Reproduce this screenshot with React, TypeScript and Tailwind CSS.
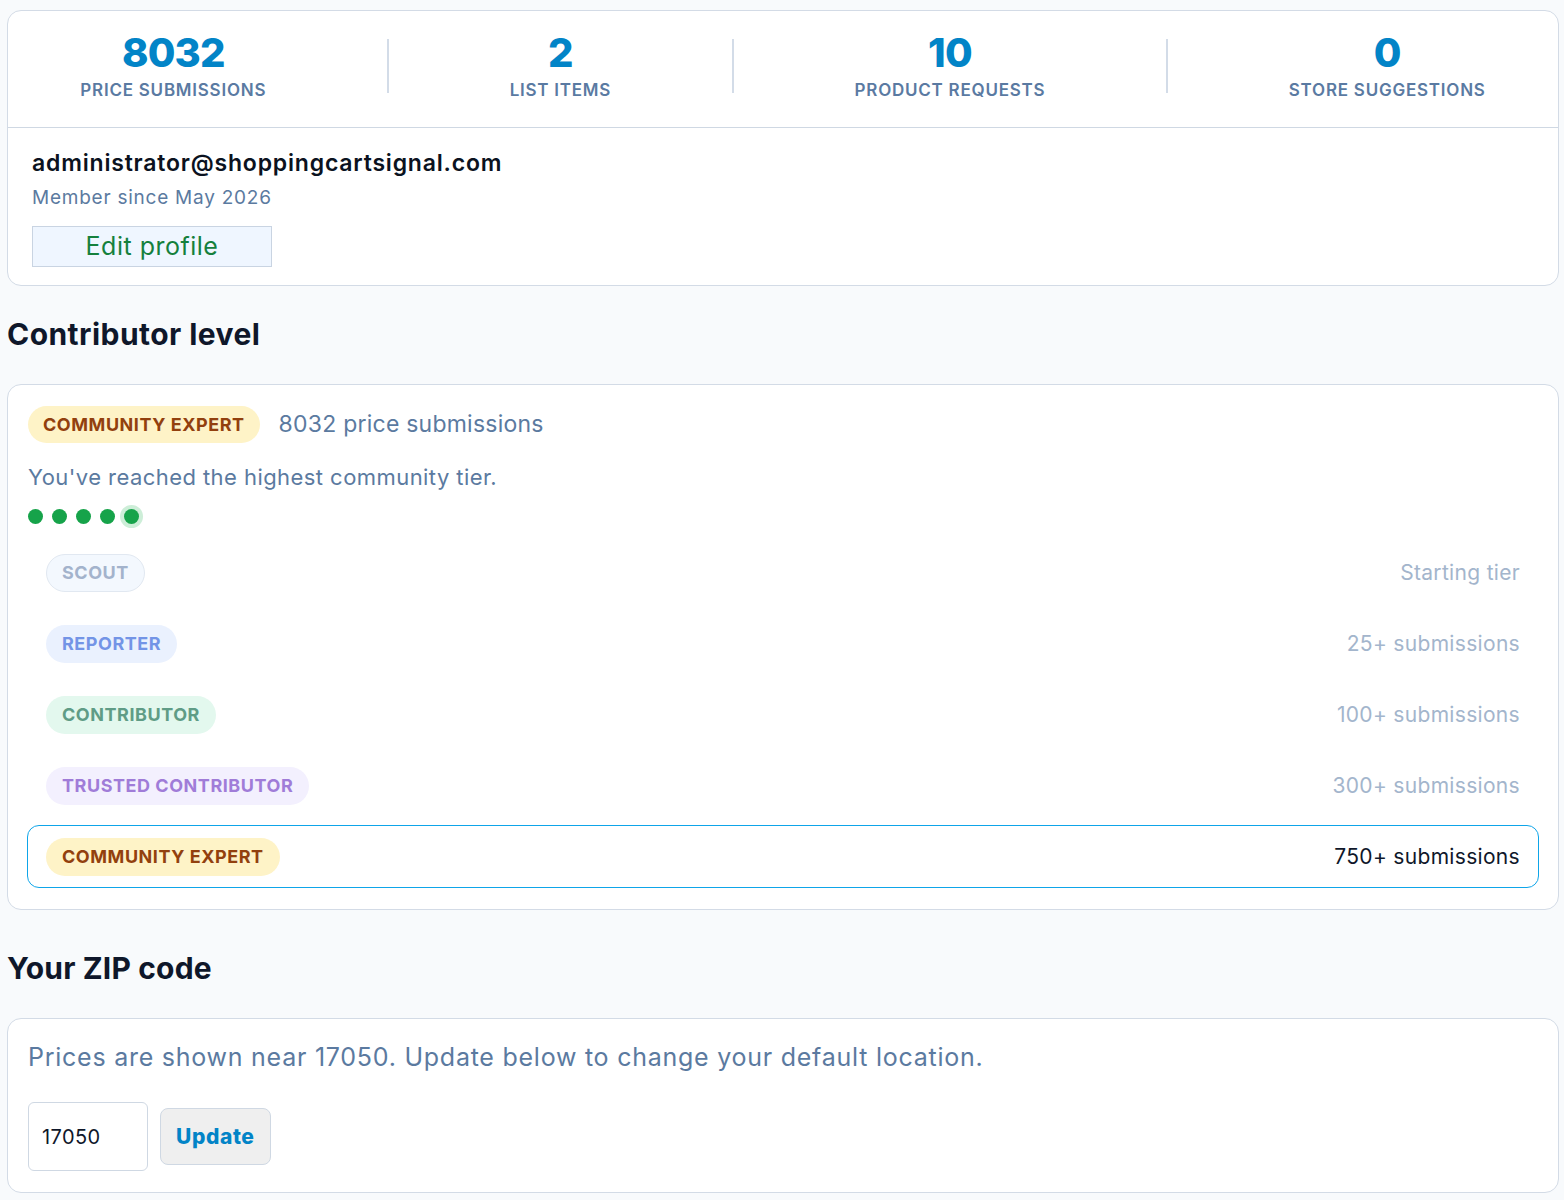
import React from "react";

const font = { fontFamily: "Inter, 'Noto Sans', sans-serif" };

const stats = [
  { value: "8032", label: "PRICE SUBMISSIONS" },
  { value: "2", label: "LIST ITEMS" },
  { value: "10", label: "PRODUCT REQUESTS" },
  { value: "0", label: "STORE SUGGESTIONS" },
];

type Tier = {
  name: string;
  note: string;
  badge: string;
  current?: boolean;
};

const tiers: Tier[] = [
  { name: "SCOUT", note: "Starting tier", badge: "bg-[#f3f8fe] text-[#a3b3cc] border border-[#e1e8f1]" },
  { name: "REPORTER", note: "25+ submissions", badge: "bg-[#eaf1fe] text-[#7394e6] border border-transparent" },
  { name: "CONTRIBUTOR", note: "100+ submissions", badge: "bg-[#e3f8ee] text-[#5f9c86] border border-transparent" },
  { name: "TRUSTED CONTRIBUTOR", note: "300+ submissions", badge: "bg-[#f3f0fe] text-[#a07cd8] border border-transparent" },
  { name: "COMMUNITY EXPERT", note: "750+ submissions", badge: "bg-[#fef3c7] text-[#92400e] border border-transparent", current: true },
];

function StatsRow() {
  const items: React.ReactNode[] = [];
  stats.forEach((s, i) => {
    if (i > 0) items.push(<div key={`d${i}`} className="w-[2px] h-[54px] bg-[#d3dce8]" />);
    items.push(
      <div key={s.label} className="flex flex-col items-center">
        <div className="text-[40px] leading-[44px] font-extrabold text-[#0284c7] tracking-[-0.02em]">{s.value}</div>
        <div className="text-[17px] leading-[22px] font-semibold text-[#5a7aa2] tracking-[0.045em] mt-[4px]">{s.label}</div>
      </div>
    );
  });
  return (
    <div className="flex items-center justify-around px-3 h-[117px] pb-[7px] border-b border-[#cfd8e3]">
      {items}
    </div>
  );
}

export default function App() {
  return (
    <div style={font} className="min-h-[1200px] bg-[#f8fafc] pl-[7px] pr-[5px] pt-[10px]">
      {/* profile summary */}
      <section className="bg-white border border-[#d3dbe6] rounded-[14px]">
        <StatsRow />
        <div className="px-6 pt-[20px] pb-[18px]">
          <div className="text-[23px] leading-[30px] font-semibold text-[#0b1220] tracking-[0.035em]">
            administrator@shoppingcartsignal.com
          </div>
          <div className="text-[19px] leading-[26px] text-[#5b7aa0] mt-[7px] tracking-[0.04em]">Member since May 2026</div>
          <button className="mt-[15px] w-[240px] h-[41px] bg-[#eff6ff] border border-[#c9d4e2] text-[#15803d] text-[25px] leading-none tracking-[0.02em]">
            Edit profile
          </button>
        </div>
      </section>

      <h2 className="text-[30px] font-bold text-[#0f172a] leading-[40px] mt-[28px] mb-[30px] tracking-[0.015em]">Contributor level</h2>

      {/* tier card */}
      <section className="bg-white border border-[#d3dbe6] rounded-[14px] px-[19px] pt-[21px] pb-[21px]">
        <div className="flex items-center gap-[19px] pl-[1px]">
          <span className="inline-flex items-center h-[37px] px-[15px] rounded-full bg-[#fef3c7] text-[#92400e] text-[18px] font-bold tracking-[0.03em]">
            COMMUNITY EXPERT
          </span>
          <span className="text-[23px] text-[#5b7aa0] tracking-[0.01em]">8032 price submissions</span>
        </div>
        <p className="mt-[20px] pl-[1px] text-[22px] leading-[28px] text-[#5b7aa0] tracking-[0.02em]">You've reached the highest community tier.</p>
        <div className="flex items-center gap-[9px] mt-[13px] h-[24px] pl-[1px]">
          {[0, 1, 2, 3].map((i) => (
            <span key={i} className="w-[15px] h-[15px] rounded-full bg-[#16a34a]" />
          ))}
          <span className="w-[15px] h-[15px] rounded-full bg-[#16a34a] ring-4 ring-[#cdeed8]" />
        </div>
        <div className="flex flex-col gap-[8px] mt-[13px]">
          {tiers.map((t) => (
            <div
              key={t.name}
              className={`flex items-center justify-between h-[63px] pl-[18px] pr-[18px] rounded-[12px] border ${
                t.current ? "border-[#0ea5e9]" : "border-transparent"
              }`}
            >
              <span className={`inline-flex items-center h-[38px] px-[15px] rounded-full text-[18px] font-bold tracking-[0.03em] ${t.badge}`}>
                {t.name}
              </span>
              <span className={`text-[21px] tracking-[0.015em] ${t.current ? "text-[#0f172a]" : "text-[#a3b5cc]"}`}>{t.note}</span>
            </div>
          ))}
        </div>
      </section>

      <h2 className="text-[30px] font-bold text-[#0f172a] leading-[40px] mt-[38px] mb-[30px] tracking-[0.005em]">Your ZIP code</h2>

      {/* zip card */}
      <section className="bg-white border border-[#d3dbe6] rounded-[14px] px-[20px] pt-[22px] pb-[21px]">
        <p className="text-[25px] leading-[32px] text-[#5b7aa0] tracking-[0.03em]">
          Prices are shown near 17050. Update below to change your default location.
        </p>
        <div className="flex items-center gap-[12px] mt-[29px]">
          <input
            defaultValue="17050"
            className="w-[120px] h-[69px] px-[13px] rounded-[6px] border border-[#cfd8e3] text-[20px] text-[#0f172a] outline-none bg-white tracking-[0.02em]"
          />
          <button className="h-[57px] px-[15px] rounded-[8px] bg-[#efefef] border border-[#cfd8e3] text-[#0284c7] text-[21px] font-extrabold tracking-[0.03em]">
            Update
          </button>
        </div>
      </section>
    </div>
  );
}
